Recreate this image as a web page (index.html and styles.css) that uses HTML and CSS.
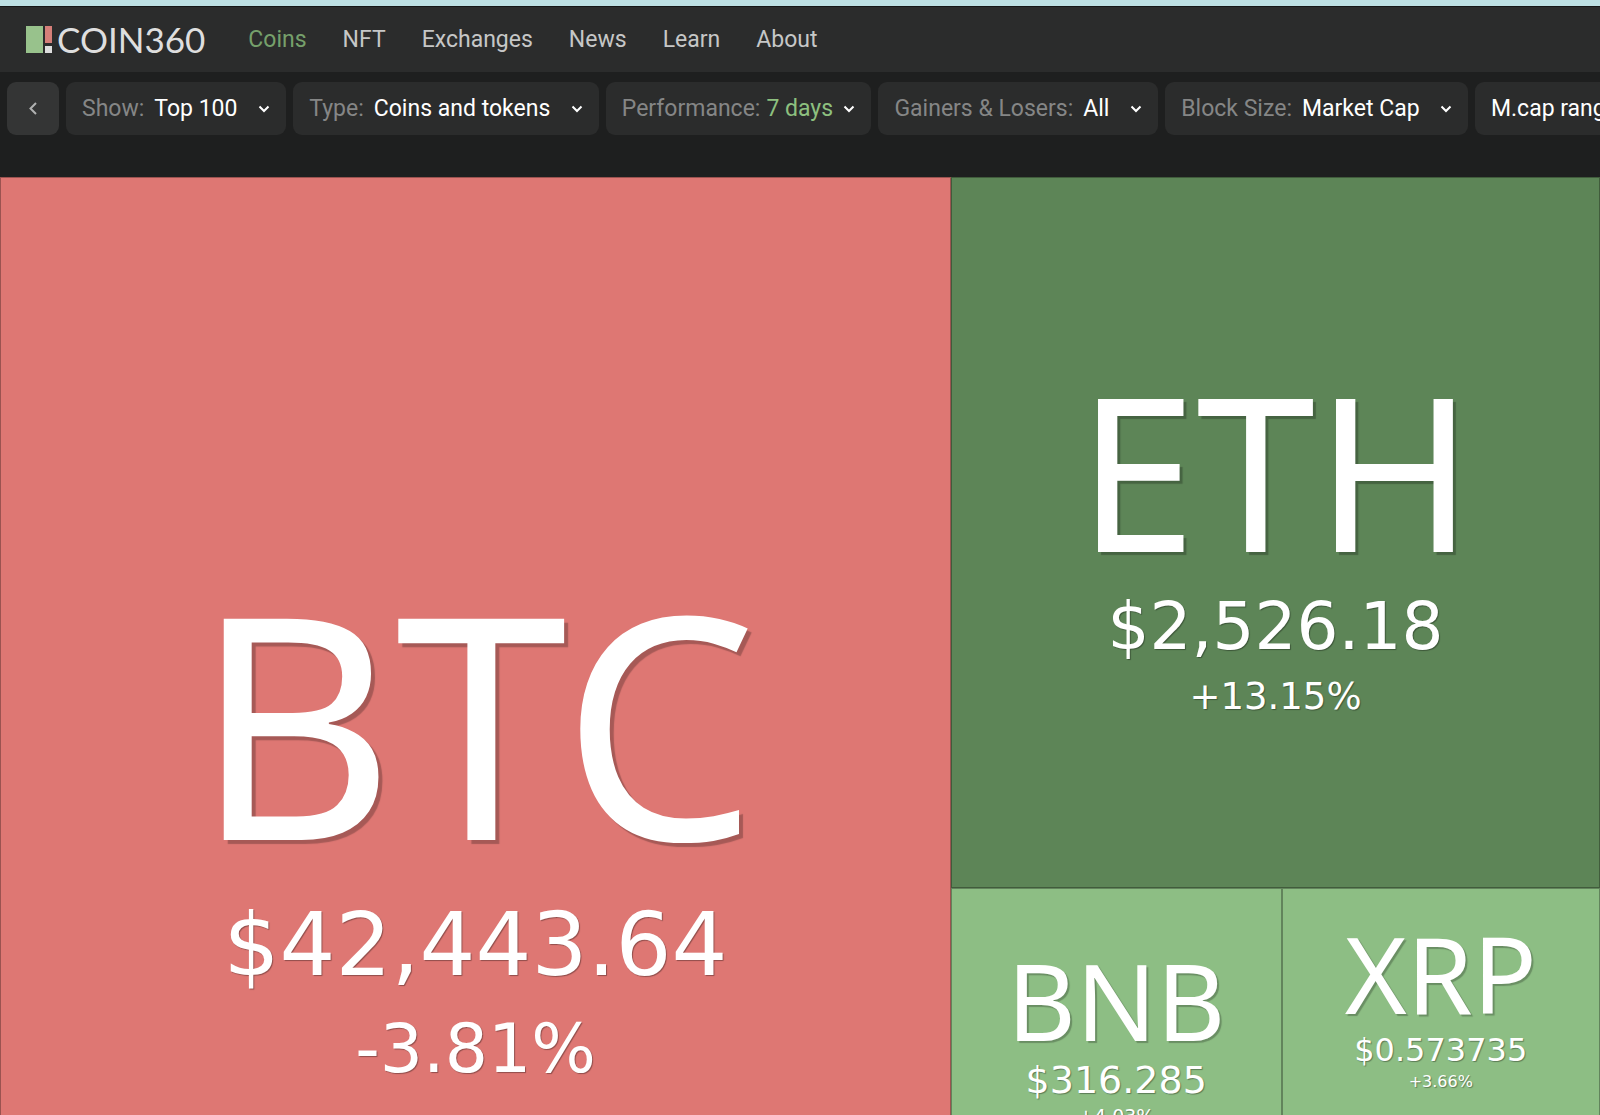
FILE: index.html
```html
<!DOCTYPE html>
<html lang="en">
<head>
    <meta charset="UTF-8">
    <title>COIN360</title>
    <link rel="stylesheet" href="styles.css">
</head>
<body>
    <!-- Header -->
    <header class="header">
        <a class="logo" href="#">
            <svg class="logo-mark" width="27" height="27" viewBox="0 0 27 27" aria-hidden="true">
                <rect x="0" y="0" width="17" height="27" fill="#98c28c"/>
                <rect x="19" y="0" width="7" height="17" fill="#d57f79"/>
                <rect x="19" y="20" width="7" height="7" fill="#dedede"/>
            </svg>
            <span>COIN360</span>
        </a>
        <nav class="navbar">
            <a class="nav-link active" href="#">Coins</a>
            <a class="nav-link" href="#">NFT</a>
            <a class="nav-link" href="#">Exchanges</a>
            <a class="nav-link" href="#">News</a>
            <a class="nav-link" href="#">Learn</a>
            <a class="nav-link" href="#">About</a>
        </nav>
    </header>

    <!-- Filters -->
    <div class="filters">
        <button class="back" type="button" aria-label="Back">
            <svg width="10" height="14" viewBox="0 0 10 14" aria-hidden="true"><path d="M8 1 2.5 6.5 8 12"/></svg>
        </button>
        <div class="filter">
            <label for="show">Show:</label>
            <select id="show"><option>Top 100</option></select>
            <svg class="arrow" width="12" height="8" viewBox="0 0 12 8" aria-hidden="true"><path d="m1.5 1.5 4.5 4.5 4.5-4.5"/></svg>
        </div>
        <div class="filter">
            <label for="type">Type:</label>
            <select id="type"><option>Coins and tokens</option></select>
            <svg class="arrow" width="12" height="8" viewBox="0 0 12 8" aria-hidden="true"><path d="m1.5 1.5 4.5 4.5 4.5-4.5"/></svg>
        </div>
        <div class="filter changed">
            <label for="performance">Performance:</label>
            <select id="performance"><option>7 days</option></select>
            <svg class="arrow" width="12" height="8" viewBox="0 0 12 8" aria-hidden="true"><path d="m1.5 1.5 4.5 4.5 4.5-4.5"/></svg>
        </div>
        <div class="filter">
            <label for="gainers">Gainers &amp; Losers:</label>
            <select id="gainers"><option>All</option></select>
            <svg class="arrow" width="12" height="8" viewBox="0 0 12 8" aria-hidden="true"><path d="m1.5 1.5 4.5 4.5 4.5-4.5"/></svg>
        </div>
        <div class="filter">
            <label for="size">Block Size:</label>
            <select id="size"><option>Market Cap</option></select>
            <svg class="arrow" width="12" height="8" viewBox="0 0 12 8" aria-hidden="true"><path d="m1.5 1.5 4.5 4.5 4.5-4.5"/></svg>
        </div>
        <button class="filter" type="button">M.cap range</button>
    </div>

    <!-- Treemap, runs past the bottom of the window -->
    <main class="map">
        <a class="tile btc" href="#">
            <span class="symbol">BTC</span>
            <span class="price">$42,443.64</span>
            <span class="change">-3.81%</span>
        </a>
        <a class="tile eth" href="#">
            <span class="symbol">ETH</span>
            <span class="price">$2,526.18</span>
            <span class="change">+13.15%</span>
        </a>
        <div class="small-tiles">
            <a class="tile bnb" href="#">
                <span class="symbol">BNB</span>
                <span class="price">$316.285</span>
                <span class="change">+4.03%</span>
            </a>
            <a class="tile xrp" href="#">
                <span class="symbol">XRP</span>
                <span class="price">$0.573735</span>
                <span class="change">+3.66%</span>
            </a>
        </div>
    </main>
</body>
</html>
```
FILE: styles.css
```css
* {
    box-sizing: border-box;
}

body {
    margin: 0;
    height: 100vh;
    overflow: hidden;
    background: #1e1f1f;
    font-family: Roboto, Arial, sans-serif;
    font-size: 23px;
    border-top: 6px solid #bde0e3;
}

a {
    text-decoration: none;
}

/* Header */
.header {
    display: flex;
    align-items: center;
    height: 66px;
    padding: 0 26px;
    background: #2b2c2c;
    border-top: 1px solid #151616;
}

.logo {
    display: flex;
    align-items: center;
    gap: 4px;
    color: #dedede;
    font-family: Lato, sans-serif;
    font-size: 35px;
    line-height: 40px;
}

.logo span {
    padding-bottom: 2px;
}

.navbar {
    display: flex;
    gap: 36px;
    margin-left: 43px;
}

.nav-link {
    color: #c6c7c7;
}

.nav-link.active {
    color: #76a06b;
}

/* Filters */
.filters {
    display: flex;
    gap: 7px;
    padding: 10px 7px 42px;
    overflow: hidden;
}

.filter,
.back {
    display: flex;
    flex: none;
    align-items: center;
    height: 53px;
    padding: 0 16px;
    border: 0;
    border-radius: 9px;
    background: #2b2c2c;
    color: #fff;
    font: inherit;
}

.back {
    justify-content: center;
    width: 52px;
    background: #343535;
}

.filter label {
    margin-right: 10px;
    color: #858686;
}

.filter select {
    appearance: none;
    margin: 0;
    padding: 0;
    border: 0;
    background: none;
    color: #fff;
    font: inherit;
}

.filter svg,
.back svg {
    fill: none;
    stroke: #fff;
    stroke-width: 2;
}

.back svg {
    stroke: #b0b1b1;
}

.filter .arrow {
    margin-left: 20px;
}

.filter.changed label {
    margin-right: 6px;
}

.filter.changed select {
    color: #8dc07f;
}

.filter.changed .arrow {
    margin-left: 10px;
}

/* Treemap */
.map {
    display: grid;
    grid-template-columns: 951fr 649fr;
    grid-template-rows: 55fr 45fr;
    height: 116vh;
}

.tile {
    display: flex;
    flex-direction: column;
    align-items: center;
    justify-content: center;
    border: 1px solid rgba(0, 0, 0, 0.3);
    color: #fff;
    font-family: "DejaVu Sans", sans-serif;
    line-height: 1;
    white-space: nowrap;
    text-shadow: 1px 1px 1px rgba(0, 0, 0, 0.35);
}

.symbol {
    font-family: "Noto Sans", sans-serif;
}

.btc {
    grid-row: 1 / 3;
    background: #de7773;
    gap: 26px;
}

.btc .symbol {
    font-size: 310px;
    text-shadow: 4px 4px 1px rgba(0, 0, 0, 0.25);
}

.btc .price {
    font-size: 88px;
}

.btc .change {
    font-size: 68px;
}

.eth {
    padding-top: 12px;
    background: #5d8557;
    gap: 18px;
}

.eth .symbol {
    font-size: 214px;
    text-shadow: 3px 3px 1px rgba(0, 0, 0, 0.25);
}

.eth .price {
    font-size: 66px;
}

.eth .change {
    font-size: 37px;
}

.small-tiles {
    display: grid;
    grid-template-columns: 330fr 318fr;
    align-items: start;
}

.bnb,
.xrp {
    background: #8dbe84;
    gap: 8px;
}

.bnb {
    height: 296px;
}

.xrp {
    height: 234px;
}

.bnb .symbol,
.xrp .symbol {
    font-size: 106px;
    text-shadow: 2px 2px 1px rgba(0, 0, 0, 0.25);
}

.bnb .price {
    font-size: 38px;
}

.bnb .change {
    font-size: 19px;
}

.xrp .price {
    font-size: 32px;
}

.xrp .change {
    font-size: 16px;
}
```
